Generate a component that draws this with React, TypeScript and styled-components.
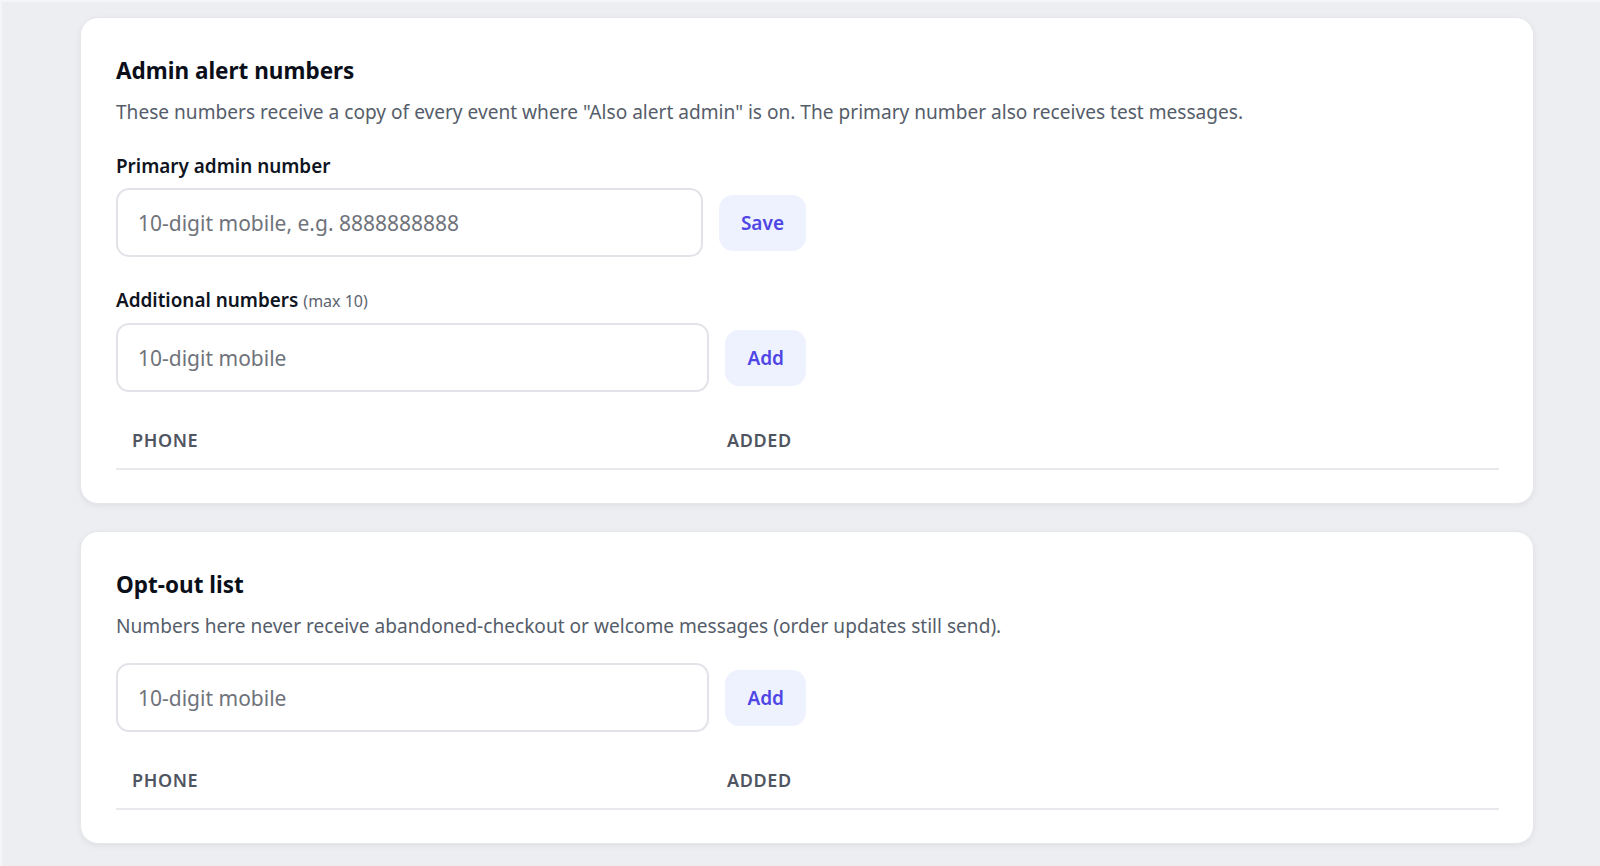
import React from "react";
import styled, { createGlobalStyle } from "styled-components";

const Global = createGlobalStyle`
  html, body { margin: 0; padding: 0; }
  body {
    background: #eceef1;
    font-family: "Noto Sans", "Open Sans", "Liberation Sans", sans-serif;
    color: #111827;
  }
  * { box-sizing: border-box; }
`;

const Page = styled.div`
  min-height: 866px;
  padding: 17px 0 22px 80px;
  display: flex;
  flex-direction: column;
  gap: 27px;
  box-shadow: inset 2px 2px 0 #f4f5f7;
`;

const Card = styled.section`
  width: 1454px;
  background: #ffffff;
  border: 1px solid #e6e7eb;
  border-radius: 18px;
  box-shadow: 0 2px 6px rgba(17, 24, 39, 0.06);
  padding: 38px 34px 33px 35px;
  display: flex;
  flex-direction: column;
`;

const Title = styled.h2`
  margin: 0;
  font-size: 22.5px;
  line-height: 30px;
  font-weight: 700;
  color: #0b0f19;
`;

const Description = styled.p`
  margin: 13px 0 0;
  font-size: 19.1px;
  line-height: 27px;
  color: #555d6a;
`;

const FieldLabel = styled.label<{ $gap?: number }>`
  display: block;
  margin-top: ${(p) => p.$gap ?? 27}px;
  font-size: 18.9px;
  line-height: 27px;
  font-weight: 600;
  color: #0f1422;
`;

const Hint = styled.span`
  font-size: 16px;
  font-weight: 400;
  color: #5d6470;
  margin-left: 5px;
`;

const InputRow = styled.div<{ $gap?: number }>`
  display: flex;
  align-items: center;
  gap: 16px;
  max-width: 690px;
  margin-top: ${(p) => p.$gap ?? 8}px;
`;

const TextInput = styled.input`
  flex: 1;
  min-width: 0;
  height: 69px;
  border: 2px solid #e2e3e8;
  border-radius: 13px;
  padding: 0 20px;
  font-family: inherit;
  font-size: 21px;
  color: #111827;
  background: #fff;
  outline: none;
  &::placeholder { color: #6f737b; }
`;

const SoftButton = styled.button`
  height: 56px;
  padding: 0 22px;
  border: none;
  border-radius: 14px;
  background: #eef2ff;
  color: #4f46e5;
  font-family: inherit;
  font-size: 19px;
  font-weight: 600;
  cursor: pointer;
`;

const Table = styled.div`
  margin-top: 26px;
  display: grid;
  grid-template-columns: 595px 1fr;
  border-bottom: 2px solid #e8e9ed;
`;

const HeadCell = styled.div`
  padding: 10px 16px 16px;
  font-size: 18px;
  line-height: 24px;
  font-weight: 600;
  letter-spacing: 0.6px;
  text-transform: uppercase;
  color: #4f5561;
`;

function NumberTable() {
  return (
    <Table>
      <HeadCell>Phone</HeadCell>
      <HeadCell>Added</HeadCell>
    </Table>
  );
}

export default function App() {
  return (
    <>
      <Global />
      <Page>
        <Card>
          <Title>Admin alert numbers</Title>
          <Description>
            These numbers receive a copy of every event where "Also alert admin" is on. The primary number also receives test messages.
          </Description>
          <FieldLabel>Primary admin number</FieldLabel>
          <InputRow>
            <TextInput placeholder="10-digit mobile, e.g. 8888888888" />
            <SoftButton>Save</SoftButton>
          </InputRow>
          <FieldLabel $gap={30}>
            Additional numbers<Hint>(max 10)</Hint>
          </FieldLabel>
          <InputRow>
            <TextInput placeholder="10-digit mobile" />
            <SoftButton>Add</SoftButton>
          </InputRow>
          <NumberTable />
        </Card>
        <Card>
          <Title>Opt-out list</Title>
          <Description>
            Numbers here never receive abandoned-checkout or welcome messages (order updates still send).
          </Description>
          <InputRow $gap={23}>
            <TextInput placeholder="10-digit mobile" />
            <SoftButton>Add</SoftButton>
          </InputRow>
          <NumberTable />
        </Card>
      </Page>
    </>
  );
}
